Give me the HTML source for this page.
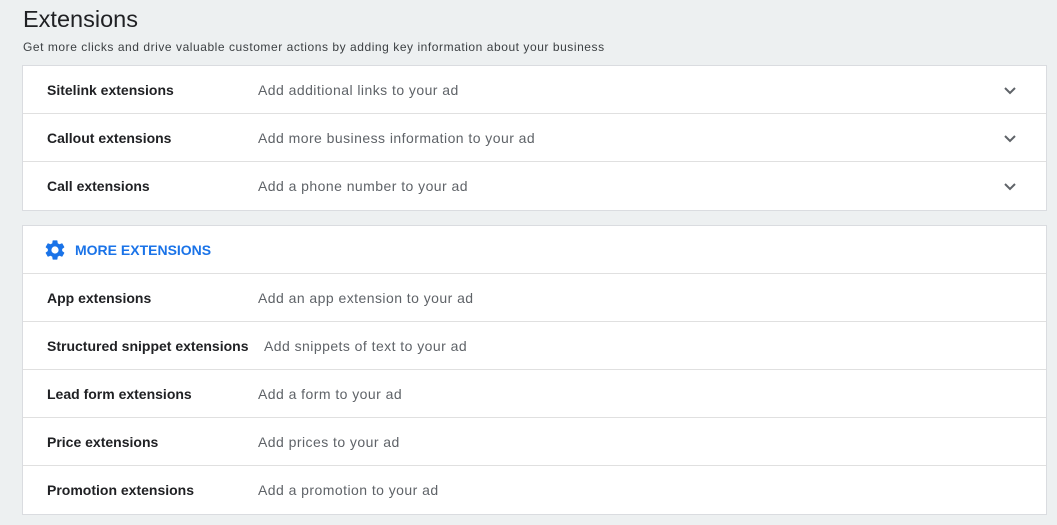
<!DOCTYPE html>
<html><head><style>
body{margin:0;width:1057px;height:525px;background:#edf0f1;font-family:"Liberation Sans",Arial,sans-serif;overflow:hidden;position:relative}
h1{position:absolute;left:23px;top:6px;margin:0;font-weight:400;font-size:23.5px;color:#202124}
.sub{position:absolute;left:23px;top:40px;font-size:12px;color:#3c4043;letter-spacing:0.55px}
.card{position:absolute;left:22px;width:1025px;background:#fff;border:1px solid #dadce0;box-sizing:border-box}
.row{height:48px;border-top:1px solid #e0e0e0;position:relative;box-sizing:border-box}
.row:first-child{border-top:none;height:47px}
.n{position:absolute;left:24px;top:16px;font-size:14px;font-weight:700;color:#202124}
.d{position:absolute;left:235px;top:16px;font-size:14px;color:#5f6368;letter-spacing:0.45px}
.chev{position:absolute;right:30px;top:21px}
.hd{color:#1a73e8;font-weight:700;font-size:14px;position:absolute;left:52px;top:16px}
</style></head><body>
<h1>Extensions</h1>
<div class="sub">Get more clicks and drive valuable customer actions by adding key information about your business</div>
<div class="card" style="top:65px;height:146px">
<div class="row"><span class="n">Sitelink extensions</span><span class="d">Add additional links to your ad</span><svg class="chev" width="12" height="8" viewBox="0 0 12 8"><path d="M1 1l5 5 5-5" fill="none" stroke="#5f6368" stroke-width="2"/></svg></div>
<div class="row"><span class="n">Callout extensions</span><span class="d">Add more business information to your ad</span><svg class="chev" width="12" height="8" viewBox="0 0 12 8"><path d="M1 1l5 5 5-5" fill="none" stroke="#5f6368" stroke-width="2"/></svg></div>
<div class="row"><span class="n">Call extensions</span><span class="d">Add a phone number to your ad</span><svg class="chev" width="12" height="8" viewBox="0 0 12 8"><path d="M1 1l5 5 5-5" fill="none" stroke="#5f6368" stroke-width="2"/></svg></div>
</div>
<div class="card" style="top:225px;height:290px">
<div class="row"><svg style="position:absolute;left:20px;top:12px" width="24" height="24" viewBox="0 0 24 24"><path fill="#1a73e8" d="M19.14 12.94c.04-.3.06-.61.06-.94 0-.32-.02-.64-.07-.94l2.030-1.58a.49.49 0 00.12-.61l-1.92-3.32a.49.49 0 00-.59-.22l-2.39.96c-.5-.38-1.03-.7-1.62-.94l-.36-2.54a.48.48 0 00-.48-.41h-3.84c-.24 0-.43.17-.47.41l-.36 2.54c-.59.24-1.13.57-1.62.94l-2.39-.96a.48.48 0 00-.59.22L2.74 8.87c-.12.21-.08.47.12.61l2.03 1.58c-.05.3-.09.63-.09.94s.02.64.07.94l-2.03 1.58a.49.49 0 00-.12.61l1.920 3.32c.12.22.37.29.59.22l2.39-.96c.5.38 1.03.7 1.62.94l.36 2.54c.05.24.24.41.48.41h3.84c.24 0 .44-.17.47-.41l.36-2.54c.59-.24 1.13-.56 1.62-.94l2.39.96c.22.08.47 0 .59-.22l1.92-3.32c.12-.22.07-.47-.12-.61l-2.01-1.58zM12 15.6A3.6 3.6 0 1112 8.4a3.6 3.6 0 010 7.2z"/></svg><span class="hd">MORE EXTENSIONS</span></div>
<div class="row"><span class="n">App extensions</span><span class="d">Add an app extension to your ad</span></div>
<div class="row"><span class="n">Structured snippet extensions</span><span class="d" style="left:241px">Add snippets of text to your ad</span></div>
<div class="row"><span class="n">Lead form extensions</span><span class="d">Add a form to your ad</span></div>
<div class="row"><span class="n">Price extensions</span><span class="d">Add prices to your ad</span></div>
<div class="row"><span class="n">Promotion extensions</span><span class="d">Add a promotion to your ad</span></div>
</div>
</body></html>
